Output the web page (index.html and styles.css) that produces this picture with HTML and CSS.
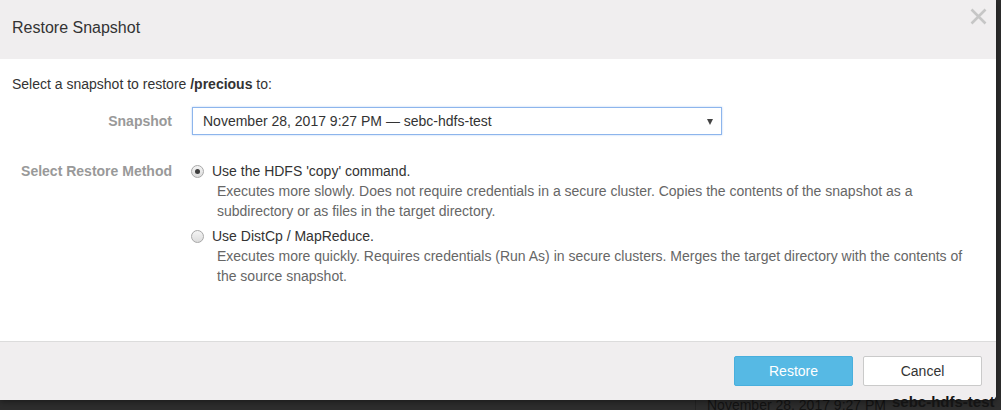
FILE: index.html
```html
<!DOCTYPE html>
<html>
<head>
<meta charset="utf-8">
<link rel="stylesheet" href="styles.css">
</head>
<body>
<div class="page">
  <div class="page-row">
    <span class="pipe"></span>
    <span class="ts">November 28, 2017 9:27 PM</span>
    <span class="snap-name">sebc-hdfs-test</span>
  </div>
</div>
<div class="modal">
  <div class="modal-header">
    <h4 class="modal-title">Restore Snapshot</h4>
    <button class="close" aria-label="Close">
      <svg width="17" height="17" viewBox="0 0 17 17"><path d="M1.5 1.5 L15.5 15.5 M15.5 1.5 L1.5 15.5" stroke="#c6c6c6" stroke-width="2.6" fill="none"/></svg>
    </button>
  </div>
  <div class="modal-body">
    <p class="intro">Select a snapshot to restore <b>/precious</b> to:</p>
    <div class="form">
      <label class="form-label label-mid">Snapshot</label>
      <div class="select">
        <span class="select-text">November 28, 2017 9:27 PM — sebc-hdfs-test</span>
        <span class="caret"></span>
      </div>
      <label class="form-label label-top">Select Restore Method</label>
      <div class="options">
        <div class="option">
          <div class="option-line"><span class="radio checked"></span><span>Use the HDFS 'copy' command.</span></div>
          <div class="option-desc">Executes more slowly. Does not require credentials in a secure cluster. Copies the contents of the snapshot as a subdirectory or as files in the target directory.</div>
        </div>
        <div class="option">
          <div class="option-line"><span class="radio"></span><span>Use DistCp / MapReduce.</span></div>
          <div class="option-desc">Executes more quickly. Requires credentials (Run As) in secure clusters. Merges the target directory with the contents of the source snapshot.</div>
        </div>
      </div>
    </div>
  </div>
  <div class="modal-footer">
    <button class="btn btn-primary">Restore</button>
    <button class="btn btn-default">Cancel</button>
  </div>
</div>
</body>
</html>
```
FILE: styles.css
```css
html, body {
  margin: 0;
  padding: 0;
}
body {
  width: 1001px;
  height: 410px;
  overflow: hidden;
  background: #2d2d2d;
  font-family: "Liberation Sans", Arial, sans-serif;
  font-size: 14px;
  color: #333;
  position: relative;
}
.page {
  padding-top: 397px;
  padding-left: 695px;
}
.page-row {
  display: flex;
  align-items: flex-start;
  line-height: 16px;
  color: #141414;
}
.pipe {
  width: 1px;
  height: 20px;
  background: #242424;
  margin-right: 11px;
  margin-top: 3px;
}
.ts {
  margin-right: 6px;
}
.snap-name {
  font-weight: bold;
  font-size: 15px;
  margin-top: -3px;
  position: relative;
  z-index: 2;
}
.modal {
  position: absolute;
  top: 0;
  left: 0;
  width: 996px;
  height: 400px;
  background: #fff;
  border-radius: 0 0 5px 0;
  display: flex;
  flex-direction: column;
  overflow: hidden;
  z-index: 1;
  box-shadow: 0 2px 6px rgba(0,0,0,0.4);
}
.modal-header {
  position: relative;
  background: #f0eeef;
  padding: 17px 12px 20px;
}
.modal-title {
  margin: 0;
  font-size: 16px;
  line-height: 22px;
  font-weight: normal;
  color: #333;
}
.close {
  position: absolute;
  top: 8px;
  right: 9px;
  width: 17px;
  height: 17px;
  padding: 0;
  border: 0;
  background: transparent;
  display: block;
}
.close svg {
  display: block;
}
.modal-body {
  flex: 1;
  padding: 15px 12px 0;
}
.intro {
  margin: 0;
  line-height: 20px;
}
.form {
  margin-top: 13px;
  display: grid;
  grid-template-columns: 160px 1fr;
  column-gap: 20px;
  row-gap: 26px;
}
.form-label {
  text-align: right;
  font-weight: bold;
  color: #999;
  line-height: 20px;
}
.label-mid {
  align-self: center;
}
.label-top {
  align-self: start;
}
.select {
  width: 528px;
  height: 26px;
  border: 1px solid #8db5ec;
  box-shadow: 0 0 2px #b4d0f4;
  display: flex;
  align-items: center;
  justify-content: space-between;
  padding: 0 8px 0 10px;
  box-sizing: content-box;
  width: 510px;
}
.select-text {
  color: #333;
  line-height: 20px;
}
.caret {
  width: 0;
  height: 0;
  border-left: 3.5px solid transparent;
  border-right: 3.5px solid transparent;
  border-top: 6px solid #444;
  margin-top: 1px;
}
.options {
  display: flex;
  flex-direction: column;
  gap: 5px;
}
.option-line {
  display: flex;
  align-items: center;
  line-height: 20px;
  color: #333;
}
.radio {
  width: 11px;
  height: 11px;
  border: 1px solid #a8a8a8;
  border-radius: 50%;
  background: linear-gradient(#f4f4f4, #dcdcdc);
  margin: 1px 8px 0 0;
  position: relative;
  flex: none;
  margin-left: -1px;
}
.radio.checked::after {
  content: "";
  position: absolute;
  left: 3px;
  top: 3px;
  width: 5px;
  height: 5px;
  border-radius: 50%;
  background: #3d3d3d;
}
.option-desc {
  padding-left: 25px;
  line-height: 20px;
  color: #666;
}
.modal-footer {
  height: 44px;
  border-top: 1px solid #dcdcdc;
  background: #f0eeef;
  padding: 14px 14px 0;
  display: flex;
  justify-content: flex-end;
  gap: 10px;
}
.btn {
  width: 119px;
  height: 30px;
  font-family: "Liberation Sans", Arial, sans-serif;
  font-size: 14px;
  border-radius: 2px;
  padding: 0;
  line-height: 28px;
}
.btn-primary {
  background: #56b9e4;
  border: 1px solid #48afdd;
  color: #fff;
}
.btn-default {
  background: #fff;
  border: 1px solid #cacaca;
  color: #333;
}
```
